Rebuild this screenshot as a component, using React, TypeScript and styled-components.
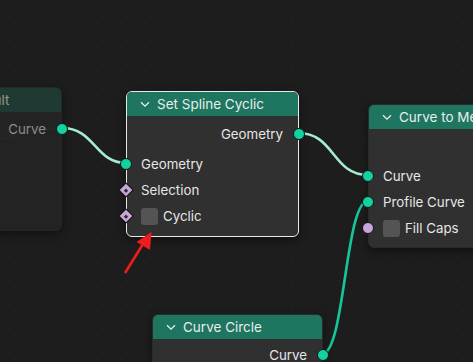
import React from "react";
import styled, { createGlobalStyle } from "styled-components";

const Global = createGlobalStyle`
  html, body { margin: 0; padding: 0; background: #1d1d1d; overflow: hidden; }
  * { box-sizing: border-box; }
`;

const Canvas = styled.div`
  position: relative;
  width: 473px;
  height: 362px;
  overflow: hidden;
  background-color: #1d1d1d;
  background-image: radial-gradient(circle, #222222 0.8px, transparent 1.2px);
  background-size: 23.6px 24px;
  background-position: -3px 5px;
  font-family: Inter, "Noto Sans", "DejaVu Sans", sans-serif;
  font-size: 13.3px;
`;

const Wires = styled.svg`
  position: absolute;
  left: 0;
  top: 0;
  z-index: 0;
`;

const Overlay = styled.svg`
  position: absolute;
  left: 0;
  top: 0;
  z-index: 5;
  pointer-events: none;
`;

const NodeBox = styled.div<{ $x: number; $y: number; $w: number; $sel?: boolean; $dim?: boolean }>`
  position: absolute;
  left: ${(p) => p.$x}px;
  top: ${(p) => p.$y}px;
  width: ${(p) => p.$w}px;
  z-index: 1;
  display: flex;
  flex-direction: column;
  border-radius: 6px;
  background: ${(p) => (p.$dim ? "rgba(36,36,36,0.92)" : "#303030")};
  border: 1px solid ${(p) => (p.$sel ? "#e8e8e8" : p.$dim ? "#262626" : "#2a2a2a")};
  box-shadow: 0 3px 8px rgba(0, 0, 0, 0.45);
`;

const Header = styled.div<{ $dim?: boolean }>`
  height: 24px;
  display: flex;
  align-items: center;
  gap: 7px;
  padding-left: 13px;
  background: ${(p) => (p.$dim ? "#1f3a32" : "#1e7560")};
  color: ${(p) => (p.$dim ? "#8f9a96" : "#e8eeec")};
  font-size: 13.5px;
  border-radius: 5px 5px 0 0;
  white-space: nowrap;
  overflow: hidden;
`;

const Chevron = styled.svg`
  flex: 0 0 auto;
`;

const Body = styled.div<{ $pt: number; $pb: number }>`
  display: flex;
  flex-direction: column;
  padding: ${(p) => p.$pt}px 0 ${(p) => p.$pb}px 0;
`;

const Row = styled.div<{ $out?: boolean; $dim?: boolean }>`
  position: relative;
  height: 26px;
  display: flex;
  align-items: center;
  justify-content: ${(p) => (p.$out ? "flex-end" : "flex-start")};
  padding: 0 15px 0 14px;
  gap: 5px;
  color: ${(p) => (p.$dim ? "#8c8c8c" : "#e6e6e6")};
  white-space: nowrap;
`;

const Spacer = styled.div<{ $h: number }>`
  height: ${(p) => p.$h}px;
`;

const Check = styled.div`
  width: 17px;
  height: 17px;
  border-radius: 3px;
  background: #545454;
  flex: 0 0 auto;
`;

const Socket = styled.div<{ $side: "l" | "r"; $color: string; $shape?: "diamond" }>`
  position: absolute;
  top: 50%;
  ${(p) => (p.$side === "l" ? "left: -1px;" : "right: -1px;")}
  width: ${(p) => (p.$shape === "diamond" ? 11 : 12)}px;
  height: ${(p) => (p.$shape === "diamond" ? 11 : 12)}px;
  background: ${(p) => p.$color};
  border: 1px solid #141414;
  border-radius: ${(p) => (p.$shape === "diamond" ? "1px" : "50%")};
  transform: translate(${(p) => (p.$side === "l" ? "-50%" : "50%")}, -50%)
    ${(p) => (p.$shape === "diamond" ? "rotate(45deg)" : "")};
  z-index: 2;
  &::after {
    content: "";
    display: ${(p) => (p.$shape === "diamond" ? "block" : "none")};
    position: absolute;
    left: 50%;
    top: 50%;
    width: 3px;
    height: 3px;
    background: #2a2a2a;
    transform: translate(-50%, -50%);
  }
`;

const TEAL = "#12d2a2";
const PURPLE = "#c9a5d9";

type SocketDef = { color: string; shape?: "diamond" };
type RowDef = {
  label: string;
  out?: boolean;
  socket?: SocketDef;
  check?: boolean;
  gapBefore?: number;
};

const ChevronIcon = () => (
  <Chevron width="10" height="7" viewBox="0 0 10 7">
    <path d="M1 1.2 L5 5.2 L9 1.2" fill="none" stroke="#e8eeec" strokeWidth="1.3" />
  </Chevron>
);

function Node(props: {
  x: number;
  y: number;
  w: number;
  title: string;
  rows: RowDef[];
  sel?: boolean;
  dim?: boolean;
  pt: number;
  pb: number;
  chevron?: boolean;
}) {
  const { x, y, w, title, rows, sel, dim, pt, pb, chevron = true } = props;
  return (
    <NodeBox $x={x} $y={y} $w={w} $sel={sel} $dim={dim}>
      <Header $dim={dim}>
        {chevron && <ChevronIcon />}
        <span>{title}</span>
      </Header>
      <Body $pt={pt} $pb={pb}>
        {rows.map((r, i) => (
          <React.Fragment key={i}>
            {r.gapBefore ? <Spacer $h={r.gapBefore} /> : null}
            <Row $out={r.out} $dim={dim}>
              {r.check && <Check />}
              <span>{r.label}</span>
              {r.socket && (
                <Socket $side={r.out ? "r" : "l"} $color={r.socket.color} $shape={r.socket.shape} />
              )}
            </Row>
          </React.Fragment>
        ))}
      </Body>
    </NodeBox>
  );
}

export default function App() {
  return (
    <>
      <Global />
      <Canvas>
        <Wires width="473" height="362" viewBox="0 0 473 362">
          <path d="M -30 146 C 10 140, 25 128, 62 128" fill="none" stroke="#1c5a4a" strokeWidth="2.2" />
          <path d="M 62 128 C 95 128, 95 163, 126 163" fill="none" stroke="#a6ebd3" strokeWidth="2.6" />
          <path d="M 298 133 C 335 133, 332 175, 368 175" fill="none" stroke="#a6ebd3" strokeWidth="2.6" />
          <path d="M 322 354 C 345 354, 345 201, 368 201" fill="none" stroke="#14c79b" strokeWidth="2.6" />
        </Wires>

        <Node
          x={-86}
          y={87}
          w={148}
          dim
          chevron={false}
          title="Curve Result"
          pt={4}
          pb={88}
          rows={[{ label: "Curve", out: true, socket: { color: TEAL } }]}
        />

        <Node
          x={126}
          y={91}
          w={173}
          sel
          title="Set Spline Cyclic"
          pt={5}
          pb={7}
          rows={[
            { label: "Geometry", out: true, socket: { color: TEAL } },
            { label: "Geometry", socket: { color: TEAL }, gapBefore: 4 },
            { label: "Selection", socket: { color: PURPLE, shape: "diamond" } },
            { label: "Cyclic", socket: { color: PURPLE, shape: "diamond" }, check: true },
          ]}
        />

        <Node
          x={368}
          y={104}
          w={172}
          title="Curve to Mesh"
          pt={4}
          pb={6}
          rows={[
            { label: "Mesh", out: true, socket: { color: TEAL } },
            { label: "Curve", socket: { color: TEAL }, gapBefore: 4 },
            { label: "Profile Curve", socket: { color: TEAL } },
            { label: "Fill Caps", socket: { color: PURPLE }, check: true },
          ]}
        />

        <Node
          x={152}
          y={314}
          w={171}
          title="Curve Circle"
          pt={3}
          pb={40}
          rows={[{ label: "Curve", out: true, socket: { color: TEAL } }]}
        />

        <Overlay width="473" height="362" viewBox="0 0 473 362">
          <line x1="125" y1="273" x2="143" y2="244" stroke="#ee1c1c" strokeWidth="2.6" />
          <polygon points="151.5,232 136.5,242 150,250" fill="#ee1c1c" />
        </Overlay>
      </Canvas>
    </>
  );
}
